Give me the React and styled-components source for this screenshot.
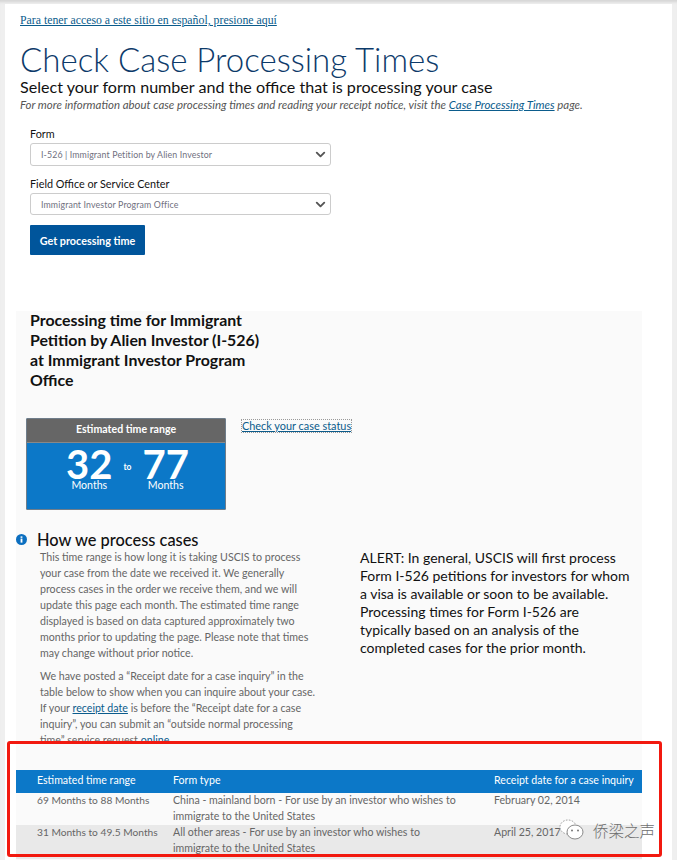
import React from "react";
import styled, { createGlobalStyle } from "styled-components";
import { ChevronDown } from "lucide-react";

const GlobalStyle = createGlobalStyle`
  html, body {
    margin: 0;
    padding: 0;
    background: #efefef;
    font-family: "Lato", "Liberation Sans", sans-serif;
  }
`;

const Page = styled.div`
  position: relative;
  width: 677px;
  height: 860px;
  overflow: hidden;
  background: #efefef;
  box-shadow: inset 0 4px 3px -2px #d4d4d4;
`;

const Sheet = styled.div`
  margin: 4px 5px 0;
  height: 856px;
  background: #fff;
  display: flex;
  flex-direction: column;
`;

const Intro = styled.div`
  padding: 9px 15px 0;
`;

const SpanishLink = styled.a`
  display: block;
  font-family: "Liberation Serif", serif;
  font-size: 11.8px;
  line-height: 15px;
  color: #0b5c8c;
  text-decoration: underline;
`;

const Title = styled.h1`
  margin: 13px 0 0;
  font-size: 33px;
  line-height: 36px;
  font-weight: 300;
  color: #0c3a6a;
`;

const Subtitle = styled.div`
  font-size: 16.1px;
  line-height: 20px;
  font-weight: 400;
  color: #111;
`;

const Note = styled.div`
  font-size: 11.45px;
  line-height: 15px;
  font-style: italic;
  color: #555;
  white-space: nowrap;

  a {
    color: #0b5c8c;
    text-decoration: underline;
  }
`;

const FormArea = styled.form`
  width: 301px;
  margin: 15px 0 0 10px;
  display: flex;
  flex-direction: column;
`;

const Label = styled.label`
  font-size: 10.8px;
  line-height: 14px;
  color: #111;
  margin-top: ${(p) => (p.$first ? 0 : "11px")};
`;

const SelectBox = styled.div`
  height: ${(p) => p.$h}px;
  box-sizing: border-box;
  margin-top: 2px;
  padding: 0 2px 0 10px;
  border: 1px solid #ccc;
  border-radius: 3px;
  display: flex;
  align-items: center;
  justify-content: space-between;
  font-size: 8.8px;
  letter-spacing: 0.12px;
  color: #707080;
  background: #fff;
`;

const SubmitButton = styled.button`
  align-self: flex-start;
  width: 115px;
  height: 30px;
  margin-top: 10px;
  padding: 0;
  border: 0;
  border-radius: 1px;
  background: #00559b;
  color: #fff;
  font-family: inherit;
  font-size: 10.8px;
  font-weight: 700;
`;

const ResultPanel = styled.section`
  margin: 56px 30px 0 11px;
  flex: 1;
  min-height: 0;
  background: #fafafa;
  display: flex;
  flex-direction: column;
`;

const ResultTitle = styled.h2`
  margin: -1px 0 0 14px;
  width: 232px;
  font-size: 15.9px;
  line-height: 20px;
  font-weight: 700;
  color: #111;
`;

const RangeRow = styled.div`
  margin: 28px 0 0 10px;
  display: flex;
  gap: 16px;
`;

const RangeCard = styled.div`
  width: 200px;
  height: 92px;
  box-sizing: border-box;
  border: 1px solid #6f7d8a;
  border-radius: 1px;
  background: #0c78c8;
  color: #fff;
`;

const RangeHead = styled.div`
  height: 24px;
  box-sizing: border-box;
  padding-bottom: 3px;
  border-bottom: 1px solid #888;
  background: #666;
  display: flex;
  align-items: center;
  justify-content: center;
  font-size: 10.6px;
  font-weight: 700;
`;

const RangeBody = styled.div`
  display: flex;
  justify-content: center;
  padding: 5px 0 0 3px;
  gap: 11px;
`;

const RangeValue = styled.div`
  display: flex;
  flex-direction: column;
  align-items: center;
  font-size: 10.6px;
  line-height: 12px;
`;

const RangeNumber = styled.span`
  font-size: 40px;
  line-height: 32px;
  font-weight: 700;
  margin-bottom: -1px;
`;

const RangeTo = styled.span`
  font-size: 8.5px;
  font-weight: 700;
  margin-top: 14px;
`;

const StatusLink = styled.a`
  align-self: flex-start;
  margin-top: 2px;
  font-size: 10.9px;
  line-height: 12px;
  color: #0b5c8c;
  text-decoration: underline;
  outline: 1px dotted #999;
`;

const InfoColumns = styled.div`
  margin: 20px 0 0 0;
  height: 214px;
  overflow: hidden;
  display: flex;
`;

const HowColumn = styled.div`
  width: 344px;
  flex: none;
`;

const HowTitle = styled.h3`
  margin: 0;
  display: flex;
  align-items: center;
  gap: 10px;
  font-size: 16.4px;
  line-height: 19px;
  font-weight: 500;
  color: #111;
`;

const InfoDot = styled.svg`
  width: 11px;
  height: 11px;
  flex: none;
`;

const HowBody = styled.div`
  padding-left: 24px;
  width: 278px;
  color: #666;
  font-size: 10.65px;
  line-height: 16px;

  p {
    margin: 0 0 7px;
  }

  a {
    color: #0b5c8c;
    text-decoration: underline;
  }
`;

const AlertText = styled.p`
  margin: 19px 0 0;
  width: 272px;
  font-size: 14px;
  line-height: 18px;
  color: #111;
`;

const CaseTable = styled.div`
  margin-top: 26px;
`;

const TableRow = styled.div`
  display: grid;
  grid-template-columns: 157px 321px 148px;
  height: ${(p) => p.$h}px;
  background: ${(p) => p.$bg};
  color: ${(p) => (p.$head ? "#fff" : "#666")};
  font-size: 10.6px;
  line-height: 16px;
  align-items: ${(p) => (p.$head ? "center" : "start")};

  & > div {
    margin-top: ${(p) => (p.$head ? "-3px" : "-1px")};
  }

  & > div:first-child {
    padding-left: 21px;
    font-size: ${(p) => (p.$head ? "10.6px" : "10.2px")};
  }
`;

const CellText = styled.div`
  width: ${(p) => (p.$narrow ? "288px" : "auto")};
  white-space: ${(p) => (p.$narrow ? "normal" : "nowrap")};
`;

const RedFrame = styled.div`
  position: absolute;
  left: 7px;
  top: 741px;
  width: 655px;
  height: 116px;
  box-sizing: border-box;
  border: 3px solid #f2190f;
  border-radius: 3px;
  pointer-events: none;
`;

const Watermark = styled.div`
  position: absolute;
  left: 558px;
  top: 818px;
  display: flex;
  align-items: center;
  gap: 7px;
  color: #6e6e6e;
  font-family: "Noto Sans CJK SC", sans-serif;
  font-size: 15.5px;
  font-weight: 300;
  line-height: 24px;
`;

const WatermarkIcon = styled.svg`
  width: 28px;
  height: 24px;
`;

export default function App() {
  return (
    <>
      <GlobalStyle />
      <Page>
        <Sheet>
          <Intro>
            <SpanishLink href="#">Para tener acceso a este sitio en español, presione aquí</SpanishLink>
            <Title>Check Case Processing Times</Title>
            <Subtitle>Select your form number and the office that is processing your case</Subtitle>
            <Note>
              For more information about case processing times and reading your receipt notice, visit the{" "}
              <a href="#">Case Processing Times</a> page.
            </Note>
            <FormArea>
              <Label $first>Form</Label>
              <SelectBox $h={23}>
                I-526 | Immigrant Petition by Alien Investor
                <ChevronDown size={15} strokeWidth={3} color="#555" />
              </SelectBox>
              <Label>Field Office or Service Center</Label>
              <SelectBox $h={22}>
                Immigrant Investor Program Office
                <ChevronDown size={15} strokeWidth={3} color="#555" />
              </SelectBox>
              <SubmitButton type="button">Get processing time</SubmitButton>
            </FormArea>
          </Intro>

          <ResultPanel>
            <ResultTitle>Processing time for Immigrant Petition by Alien Investor (I-526) at Immigrant Investor Program Office</ResultTitle>
            <RangeRow>
              <RangeCard>
                <RangeHead>Estimated time range</RangeHead>
                <RangeBody>
                  <RangeValue>
                    <RangeNumber>32</RangeNumber>
                    Months
                  </RangeValue>
                  <RangeTo>to</RangeTo>
                  <RangeValue>
                    <RangeNumber>77</RangeNumber>
                    Months
                  </RangeValue>
                </RangeBody>
              </RangeCard>
              <StatusLink href="#">Check your case status</StatusLink>
            </RangeRow>

            <InfoColumns>
              <HowColumn>
                <HowTitle>
                  <InfoDot viewBox="0 0 12 12">
                    <circle cx="6" cy="6" r="6" fill="#0c6fc0" />
                    <rect x="5" y="5" width="2" height="4.4" fill="#fff" />
                    <rect x="5" y="2.6" width="2" height="1.6" fill="#fff" />
                  </InfoDot>
                  How we process cases
                </HowTitle>
                <HowBody>
                  <p>
                    This time range is how long it is taking USCIS to process your case from the date we received it. We generally
                    process cases in the order we receive them, and we will update this page each month. The estimated time range
                    displayed is based on data captured approximately two months prior to updating the page. Please note that times
                    may change without prior notice.
                  </p>
                  <p>
                    We have posted a “Receipt date for a case inquiry” in the table below to show when you can inquire about your case.
                    If your <a href="#">receipt date</a> is before the “Receipt date for a case inquiry”, you can submit an “outside
                    normal processing time” service request <a href="#">online</a>.
                  </p>
                </HowBody>
              </HowColumn>
              <AlertText>
                ALERT: In general, USCIS will first process Form I-526 petitions for investors for whom a visa is available or soon
                to be available. Processing times for Form I-526 are typically based on an analysis of the completed cases for the
                prior month.
              </AlertText>
            </InfoColumns>

            <CaseTable>
              <TableRow $head $h={23} $bg="#0c78c8">
                <div>Estimated time range</div>
                <div>Form type</div>
                <div>Receipt date for a case inquiry</div>
              </TableRow>
              <TableRow $h={32} $bg="#fafafa">
                <div>69 Months to 88 Months</div>
                <CellText $narrow>China - mainland born - For use by an investor who wishes to immigrate to the United States</CellText>
                <CellText>February 02, 2014</CellText>
              </TableRow>
              <TableRow $h={34} $bg="#e9e9e9">
                <div>31 Months to 49.5 Months</div>
                <CellText $narrow>All other areas - For use by an investor who wishes to immigrate to the United States</CellText>
                <CellText>April 25, 2017</CellText>
              </TableRow>
            </CaseTable>
          </ResultPanel>
        </Sheet>

        <RedFrame />
        <Watermark>
          <WatermarkIcon viewBox="0 0 28 24">
            <ellipse cx="10" cy="9" rx="8" ry="7" fill="#fff" stroke="#9a9a9a" strokeWidth="1" strokeDasharray="1.6 1.4" />
            <ellipse cx="17" cy="14" rx="8" ry="7" fill="#fff" stroke="#8a8a8a" strokeWidth="1" />
            <circle cx="14" cy="12.5" r="1" fill="#777" />
            <circle cx="20" cy="12.5" r="1" fill="#777" />
          </WatermarkIcon>
          侨梁之声
        </Watermark>
      </Page>
    </>
  );
}
